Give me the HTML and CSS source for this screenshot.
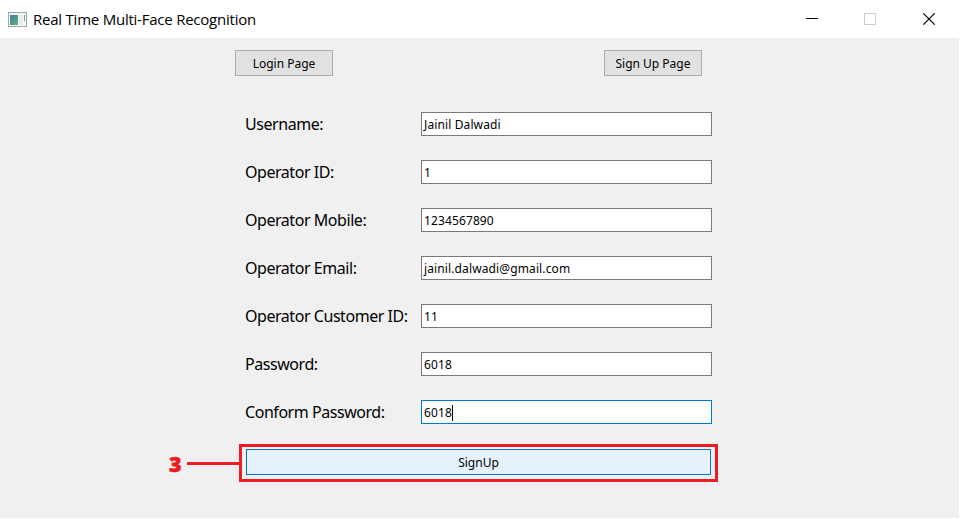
FILE: index.html
```html
<!DOCTYPE html>
<html lang="en">
<head>
<meta charset="utf-8">
<title>Real Time Multi-Face Recognition</title>
<link rel="stylesheet" href="styles.css">
</head>
<body>
<div class="window">
  <header class="titlebar">
    <svg class="app-icon" width="19" height="16" viewBox="0 0 19 16">
      <defs>
        <linearGradient id="screen" x1="0" y1="0" x2="1" y2="1">
          <stop offset="0" stop-color="#427d9c"/>
          <stop offset="1" stop-color="#62b07c"/>
        </linearGradient>
      </defs>
      <rect x=".5" y=".5" width="18" height="14" fill="#f4f6f8" stroke="#a2a6aa"/>
      <rect x="2" y="3" width="8" height="10" fill="url(#screen)"/>
      <rect x="11" y="3" width="4" height="10" fill="#e8edf2"/>
      <path d="M16.5 3v6" stroke="#69a98c"/>
    </svg>
    <h1 class="title">Real Time Multi-Face Recognition</h1>
    <svg class="controls" width="130" height="12" viewBox="0 0 130 12" fill="none" shape-rendering="crispEdges">
      <path d="M0 5.5h12" stroke="#000"/>
      <rect x="58.5" y=".5" width="11" height="11" stroke="#ccc"/>
      <path d="M117.3 .3l11.4 11.4M128.7 .3l-11.4 11.4" stroke="#000" stroke-width="1.1" shape-rendering="auto"/>
    </svg>
  </header>
  <main class="content">
    <nav class="tabs">
      <button class="tab">Login Page</button>
      <button class="tab">Sign Up Page</button>
    </nav>
    <form class="form">
      <label class="row"><span class="name">Username:</span><span class="field">Jainil Dalwadi</span></label>
      <label class="row"><span class="name">Operator ID:</span><span class="field">1</span></label>
      <label class="row"><span class="name">Operator Mobile:</span><span class="field">1234567890</span></label>
      <label class="row"><span class="name">Operator Email:</span><span class="field">jainil.dalwadi@gmail.com</span></label>
      <label class="row"><span class="name">Operator Customer ID:</span><span class="field">11</span></label>
      <label class="row"><span class="name">Password:</span><span class="field">6018</span></label>
      <label class="row"><span class="name">Conform Password:</span><span class="field focused">6018<i class="caret"></i></span></label>
    </form>
    <div class="callout">
      <span class="step">3</span>
      <span class="leader"></span>
      <div class="highlight"><button class="submit">SignUp</button></div>
    </div>
  </main>
</div>
</body>
</html>
```
FILE: styles.css
```css
* { box-sizing: border-box; }
body { margin: 0; background: #fff; color: #000; font-family: "Noto Sans", sans-serif; }
.window { width: 959px; height: 518px; background: #f0f0f0; }
.titlebar { display: flex; align-items: center; height: 38px; padding: 0 23px 0 8px; background: #fff; }
.app-icon { margin-top: 1px; }
.title { margin: 0 auto 0 6px; font: 400 15px/20px "Open Sans", sans-serif; letter-spacing: -.23px; white-space: nowrap; }
.controls { flex: none; }
.content { padding-top: 12px; }
.tabs { display: flex; justify-content: space-between; width: 467px; margin-left: 235px; }
.tab { width: 98px; height: 26px; padding: 1px 0 0; border: 1px solid #adadad; background: #e1e1e1; color: #000; font: 12px/16px "Noto Sans", sans-serif; }
.form { display: grid; gap: 24px; width: 467px; margin: 36px 0 0 245px; }
.row { display: flex; align-items: center; height: 24px; }
.name { width: 176px; font-size: 16px; line-height: 24px; letter-spacing: -.45px; white-space: nowrap; }
.field { display: flex; align-items: center; width: 291px; height: 24px; padding: 1px 2px 0; border: 1px solid #7a7a7a; background: #fff; font-size: 12px; line-height: 16px; letter-spacing: .12px; }
.focused { border-color: #0078d7; }
.caret { width: 1px; height: 16px; background: #000; }
.callout { display: flex; align-items: center; margin: 20px 0 0 168px; }
.step { width: 19px; padding: 1px 0 0 1px; color: #ed1c24; font: 800 21.5px/28px "Open Sans", sans-serif; -webkit-text-stroke: .6px #ed1c24; }
.leader { width: 52px; height: 3px; background: #ed1c24; }
.highlight { width: 479px; height: 38px; padding: 2px 4px; border: 3px solid #ed1c24; }
.submit { display: block; width: 465px; height: 26px; padding: 2px 0 0; border: 1px solid #0078d7; background: #e5f1fb; color: #000; font: 12px/16px "Noto Sans", sans-serif; }
```
